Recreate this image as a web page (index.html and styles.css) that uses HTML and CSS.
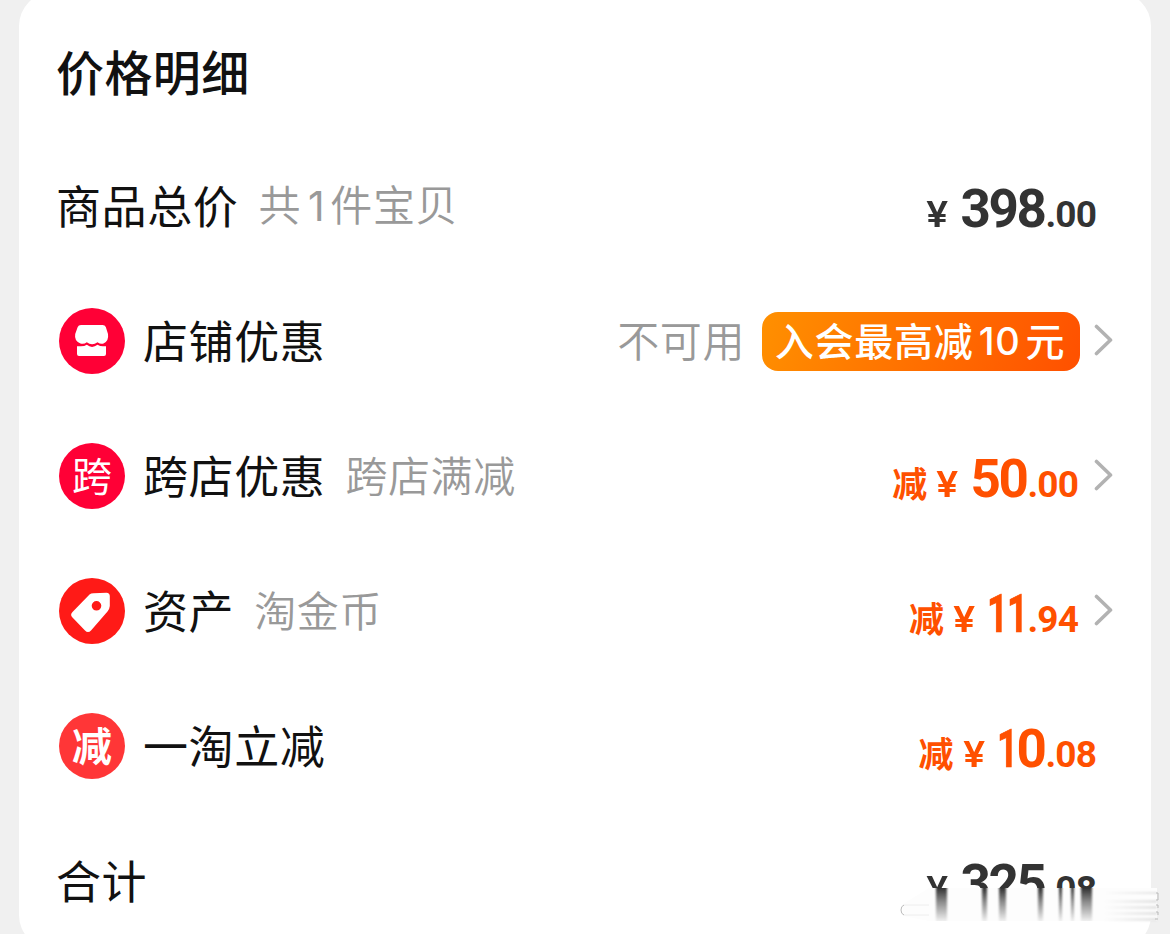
FILE: index.html
```html
<!DOCTYPE html>
<html lang="zh-CN">
<head>
<meta charset="utf-8">
<title>价格明细</title>
<link rel="stylesheet" href="styles.css">
</head>
<body>
<main class="card">
  <h1 class="title">价格明细</h1>
  <section class="row">
    <span class="label">商品总价</span><span class="note">共<span class="count">1</span>件宝贝</span>
    <span class="price dark end"><span class="yen">¥</span><span class="int">398</span><span class="dec">.00</span></span>
  </section>
  <section class="row">
    <svg class="icon" viewBox="0 0 66 66"><circle cx="33" cy="33" r="33" fill="#ff0036"/><path fill="#fff" d="M22 17H43.500Q46 17 46.800 19L49 26Q50 33 44.500 35.500Q41.500 36.500 38.500 34.200Q33 38.500 27.800 34.200Q25 36.500 21.500 35.500Q15 33 16.200 26L18.700 19Q19.500 17 22 17Z"/><path fill="#fff" d="M18 38.300H22Q25.500 38.300 27.800 36.800Q33 41 38.500 36.800Q41 38.300 44 38.300H47V46Q47 48 45 48H20Q18 48 18 46Z"/></svg>
    <span class="label">店铺优惠</span>
    <span class="note unavailable">不可用</span>
    <span class="badge">入会最高减<span class="ten">10</span>元</span>
    <svg class="chevron" viewBox="0 0 20 32"><path d="M2.500 2.500L16.500 16L2.500 29.500"/></svg>
  </section>
  <section class="row">
    <span class="icon disc cross">跨</span>
    <span class="label">跨店优惠</span><span class="note">跨店满减</span>
    <span class="price"><span class="cut">减</span><span class="yen">¥</span><span class="int">50</span><span class="dec">.00</span></span>
    <svg class="chevron" viewBox="0 0 20 32"><path d="M2.500 2.500L16.500 16L2.500 29.500"/></svg>
  </section>
  <section class="row">
    <svg class="icon" viewBox="0 0 66 66"><circle cx="33" cy="33" r="33" fill="#ff1a17"/><path fill="#fff" fill-rule="evenodd" d="M30.500 16.500Q32 15.300 34.500 15.200L47.500 14.800Q50.800 15 50.800 18V28Q50.600 31 48.500 33.500L32 52.500Q29 55.500 26 52.500L13 39Q11 36.500 13.500 34ZM37.500 23A4.800 4.800 0 1 0 37.500 32.600A4.800 4.800 0 1 0 37.500 23Z"/></svg>
    <span class="label">资产</span><span class="note note-coin">淘金币</span>
    <span class="price"><span class="cut">减</span><span class="yen">¥</span><span class="int"><span class="one">1</span><span class="one">1</span></span><span class="dec">.94</span></span>
    <svg class="chevron" viewBox="0 0 20 32"><path d="M2.500 2.500L16.500 16L2.500 29.500"/></svg>
  </section>
  <section class="row">
    <span class="icon disc minus">减</span>
    <span class="label">一淘立减</span>
    <span class="price end"><span class="cut">减</span><span class="yen">¥</span><span class="int"><span class="one">1</span>0</span><span class="dec">.08</span></span>
  </section>
  <section class="row">
    <span class="label">合计</span>
    <span class="price dark end"><span class="yen">¥</span><span class="int">325</span><span class="dec">.08</span></span>
    <svg class="smear" viewBox="0 0 262 38">
      <defs>
        <linearGradient id="fade" x1="0" y1="0" x2="0" y2="1"><stop offset="0" stop-color="#333"/><stop offset=".4" stop-color="#888"/><stop offset="1" stop-color="#f0f0f0"/></linearGradient>
        <linearGradient id="edge"><stop offset="0" stop-color="#fdfdfd"/><stop offset="1" stop-color="#e2e2e2"/></linearGradient>
        <filter id="soft"><feGaussianBlur stdDeviation=".8 0"/></filter>
        <filter id="mist"><feGaussianBlur stdDeviation="1"/></filter>
      </defs>
      <path fill="#fdfdfd" d="M30 0H258V33H30L4 28V16Z"/>
      <g fill="url(#fade)" filter="url(#soft)"><rect x="37" y="0" width="11" height="33"/><rect x="83" y="0" width="5" height="33"/><rect x="100" y="0" width="7" height="33"/><rect x="139" y="0" width="5" height="33"/><rect x="160" y="0" width="3" height="33"/><rect x="172" y="0" width="3" height="33"/><rect x="182" y="0" width="11" height="33"/></g>
      <g fill="url(#edge)" filter="url(#mist)"><rect x="205" y="4" width="53" height="2"/><rect x="205" y="12" width="53" height="3"/><rect x="205" y="18" width="53" height="3"/><rect x="205" y="24" width="53" height="3"/><rect x="205" y="30" width="53" height="3"/></g>
      <path d="M257 5H259V12H257M257 17H259V20M257 24H259V27M256 31H259" fill="none" stroke="#bbb"/>
      <path d="M5 17Q2 18 2 22Q2 26 5 27" fill="none" stroke="#bbb"/>
      <path d="M5 17H30M5 27H30" fill="none" stroke="#eee"/>
    </svg>
  </section>
</main>
</body>
</html>
```
FILE: styles.css
```css
* { box-sizing: border-box; }
body {
  margin: 0;
  height: 934px;
  overflow: hidden;
  background: #f0f0f0;
  font-family: "Noto Sans CJK SC", sans-serif;
}
.card {
  width: 1132px;
  height: 957px;
  margin: -8px 0 0 19px;
  padding: 8px 37px 0 37px;
  border-radius: 34px;
  background: #fff;
}
.title {
  height: 138px;
  margin: 0;
  padding-top: 35px;
  color: #111;
  font-size: 48px;
  font-weight: 500;
  letter-spacing: .4px;
  line-height: 70px;
}
.row {
  position: relative;
  display: flex;
  align-items: center;
  height: 135px;
  white-space: nowrap;
}
.label {
  padding-bottom: 2px;
  color: #111;
  font-size: 45px;
  font-weight: 400;
  letter-spacing: .6px;
  line-height: 66px;
}
.note {
  margin-left: 20px;
  padding-bottom: 3px;
  color: #999;
  font-size: 42px;
  font-weight: 350;
  letter-spacing: .6px;
  line-height: 62px;
}
.count {
  margin: 0 5px 0 7px;
  font-family: Inter, sans-serif;
  font-size: 41px;
  font-weight: 400;
}
.icon {
  flex: none;
  width: 66px;
  height: 66px;
  margin: 0 18px 0 3px;
}
.disc {
  display: flex;
  align-items: center;
  justify-content: center;
  padding-bottom: 3px;
  border-radius: 50%;
  color: #fff;
  font-size: 40px;
  line-height: 60px;
}
.cross { background: #ff0036; }
.minus { background: #ff3637; font-weight: 600; }
.unavailable { margin-left: auto; }
.badge {
  display: flex;
  align-items: center;
  justify-content: center;
  width: 318px;
  height: 59px;
  margin: 1px -1px 0 17px;
  padding: 0 2px 4px 0;
  border-radius: 16px;
  background: linear-gradient(110deg, #ff9000, #ff5000);
  color: #fff;
  font-size: 39px;
  font-weight: 500;
  letter-spacing: .8px;
  line-height: 54px;
}
.ten {
  margin: 3px 5px 0 5px;
  font-family: Inter, sans-serif;
  font-size: 38px;
}
.chevron {
  flex: none;
  width: 20px;
  height: 32px;
  margin: 0 0 1px 16px;
  fill: none;
  stroke: #b2b2b2;
  stroke-width: 3.600;
  stroke-linecap: round;
  stroke-linejoin: round;
}
.badge + .chevron { margin-left: 15px; }
.price {
  display: flex;
  align-items: baseline;
  height: 70px;
  margin: 7px 0 0 auto;
  color: #ff5000;
  font-family: Roboto, sans-serif;
  font-weight: 700;
  line-height: 70px;
}
.dark { color: #333; }
.end { margin-right: 18px; }
.cut {
  margin-right: 10px;
  font-family: "Noto Sans CJK SC", sans-serif;
  font-size: 35px;
  font-weight: 600;
}
.yen {
  margin-right: 13px;
  font-family: Inter, sans-serif;
  font-size: 36px;
  font-weight: 600;
  transform: scaleX(1.1);
}
.int { font-size: 53px; letter-spacing: -2.400px; }
.dec { margin-left: 1px; font-size: 37px; letter-spacing: -.9px; }
.one {
  display: inline-block;
  width: 19.600px;
  transform: scaleX(.69);
  transform-origin: 0 50%;
  -webkit-text-stroke: .7px currentColor;
}
.smear {
  position: absolute;
  left: 843px;
  top: 75px;
  width: 262px;
  height: 38px;
}
```
